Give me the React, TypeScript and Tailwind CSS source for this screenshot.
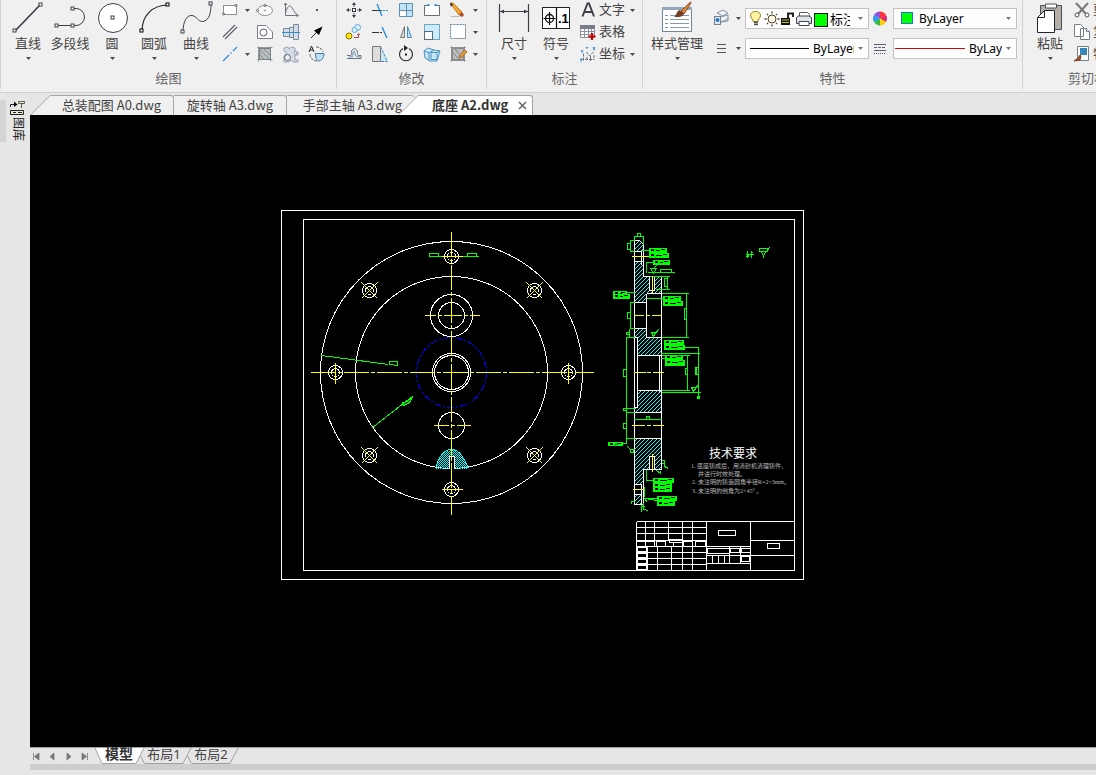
import type { ReactNode } from "react";

const INK = "#3b3f4a";
const BLUE = "#2b8fd8";
const PALE = "#bfe3f7";

function Caret({ tone = "#4a4a4a" }: { tone?: string }) {
  return (
    <svg width="5" height="3" viewBox="0 0 5 3" className="shrink-0" aria-hidden="true">
      <path d="M0 0H5L2.5 3Z" fill={tone} />
    </svg>
  );
}

function BigButton({ label, wide, caret = true, children }: { label: string; wide?: boolean; caret?: boolean; children: ReactNode }) {
  return (
    <button className={`flex shrink-0 flex-col items-center ${wide ? "w-14" : "w-[42px]"}`}>
      <svg width="42" height="36" viewBox="0 0 42 36" fill="none" stroke={INK} aria-hidden="true">
        {children}
      </svg>
      <span className="whitespace-nowrap leading-[14px]">{label}</span>
      <span className="flex h-4 items-center">{caret && <Caret />}</span>
    </button>
  );
}

function Tool({ name, children }: { name: string; children: ReactNode }) {
  return (
    <button aria-label={name} className="h-5 w-5 shrink-0">
      <svg width="20" height="20" viewBox="0 0 20 20" fill="none" stroke="#59606e" aria-hidden="true">
        {children}
      </svg>
    </button>
  );
}

function Drop({ name, show = true }: { name: string; show?: boolean }) {
  return show ? (
    <button aria-label={name} className="flex h-5 w-[15px] shrink-0 items-center justify-center">
      <Caret />
    </button>
  ) : (
    <span className="w-[15px] shrink-0" />
  );
}

function Group({ title, className, children }: { title: string; className?: string; children: ReactNode }) {
  return (
    <section aria-label={title} className={`flex h-[89px] shrink-0 flex-col border-r border-[#d2d2d2] ${className ?? ""}`}>
      <div className="flex h-[69px] pl-[6px]">{children}</div>
      <h2 className="text-center leading-[18px] text-[#666]">{title}</h2>
    </section>
  );
}

function Knot({ x, y, c = INK }: { x: number; y: number; c?: string }) {
  return <rect x={x - 1.5} y={y - 1.5} width="3" height="3" fill="#fff" stroke={c} />;
}

function DrawGroup() {
  return (
    <Group title="绘图" className="w-[337px] border-l">
      <BigButton label="直线">
        <path d="M8 31 33 5" strokeWidth="1.7" />
        <Knot x={7.5} y={30.5} />
        <Knot x={33.5} y={4.5} />
      </BigButton>
      <BigButton label="多段线" caret={false}>
        <path d="M7 25.5H23M25 8.5h2a8.5 8.5 0 0 1 0 17h-2" />
        <Knot x={7.5} y={25.5} />
        <Knot x={23.5} y={25.5} />
        <Knot x={23.5} y={8.5} />
      </BigButton>
      <BigButton label="圆">
        <circle cx="22" cy="18" r="14.5" fill="#fff" />
        <Knot x={21.5} y={17.5} />
      </BigButton>
      <BigButton label="圆弧">
        <path d="M9 31C9 16 19 5 35 5" stroke="#222" strokeWidth="1.2" />
        <Knot x={8.5} y={30.5} c="#000" />
        <Knot x={34.5} y={4.5} c="#000" />
      </BigButton>
      <BigButton label="曲线">
        <path d="M8 32C8 21 12 15 17 15.500C22 16 23 22 28 21.500C34 20 36 14 36 4" />
        <Knot x={7.500} y={31.500} />
        <Knot x={35.500} y={3.500} />
      </BigButton>
      <div className="ml-[3px] flex flex-col gap-[2px]">
        <div className="flex">
          <Tool name="矩形">
            <rect x="3.500" y="5.500" width="13" height="9" fill="#fff" stroke="#8a8f99" />
            <circle cx="3.500" cy="14" r="1" fill="#fff" />
            <circle cx="16" cy="5.500" r="1" fill="#fff" />
          </Tool>
          <Drop name="矩形选项" />
          <div className="flex gap-[6px]">
            <Tool name="椭圆">
              <ellipse cx="10" cy="10.500" rx="7.500" ry="5" fill="#fff" stroke="#8a8f99" />
              <path d="M10 9v3M8.500 10.500h3" stroke="#99aaaa" strokeWidth=".8" />
              <circle cx="10" cy="5.500" r="1" fill="#fff" />
              <circle cx="2.500" cy="10.500" r="1" fill="#fff" />
            </Tool>
            <Tool name="函数曲线">
              <path d="M4.500 3V15.500H17M3 5l1.500-2L6 5M15.500 14l2 1.500-2 1.500" stroke="#6c727d" />
              <path d="M4.500 13C6 7 8 5 10 6.500C12 8 13 13 16 14.500" stroke="#6c727d" />
            </Tool>
            <Tool name="点">
              <rect x="9" y="9" width="2" height="2" fill="#555" stroke="none" />
            </Tool>
          </div>
        </div>
        <div className="flex">
          <Tool name="双线">
            <path d="M3 15 15 3M5 17 17 5" strokeWidth="1.300" />
            <path d="M4 16 16 4" stroke="#fff" strokeWidth=".8" />
          </Tool>
          <Drop name="双线选项" show={false} />
          <div className="flex gap-[6px]">
            <Tool name="面域">
              <path d="M2.500 3.500H11L17.500 10V16.500H2.500Z" fill="#fff" stroke="#7b818c" />
              <circle cx="8.500" cy="10.500" r="3.500" />
            </Tool>
            <Tool name="轴">
              <path d="M2.500 6.500h6v8h-6zM8.500 5.500h4v10h-4zM12.500 2.500h5v15h-5z" fill="#d3dce6" stroke="#7b8ba0" />
              <path d="M1 10.500H19" stroke={BLUE} />
            </Tool>
            <Tool name="箭头">
              <path d="M4 16 10 10" stroke="#222" />
              <path d="M15.500 4.500 12 13 7 8.500Z" fill="#000" stroke="none" />
            </Tool>
          </div>
        </div>
        <div className="flex">
          <Tool name="中心线">
            <path d="M3 17 9 11M10.500 9.500l1-1M13 7 17 3" stroke={BLUE} strokeWidth="1.300" />
          </Tool>
          <Drop name="中心线选项" />
          <div className="flex gap-[6px]">
            <Tool name="填充">
              <rect x="4.500" y="4.500" width="11" height="11" fill="#b8bdbf" stroke="#777e82" />
              <path d="M2.500 3.500H17.500M3.500 2.500V17.500M15.500 2.500V17.500M2.500 15.500H17.500M5 6l9 9M5 11l4 4M9 5l6 6" stroke="#7c8387" strokeWidth=".8" />
            </Tool>
            <Tool name="齿轮">
              <path d="M3 4l4-1 1 2 2-2 4 1v4h3v3h-3v5h3v2h-5l-2-2-2 2H3V12L6 9 3 7Z" fill="#d8dee9" stroke="#98a1b3" />
              <circle cx="6.500" cy="13.500" r="3" fill="#f0f0f0" />
              <circle cx="14.500" cy="9" r="1.500" fill="#f0f0f0" stroke="#98a1b3" />
            </Tool>
            <Tool name="对称画线">
              <path d="M9 3a7 7 0 0 1 7 5M3 10a7 7 0 0 0 7 7" strokeDasharray="3 1" />
              <path d="M8.500 9.500H17C17 14 14 17 12 17S8.500 15 8.500 9.500Z" fill="#b8e0fb" stroke="#52758f" />
              <path d="M2 8 4.500 2 7 8M3 6h3" stroke="#222" />
            </Tool>
          </div>
        </div>
      </div>
    </Group>
  );
}

function ModifyGroup() {
  return (
    <Group title="修改" className="w-[150px]">
      <div className="ml-px flex flex-col gap-[2px]">
        <div className="flex">
          <div className="flex gap-[6px]">
            <Tool name="移动">
              <path d="M10 3v4M10 13v4M3 10h4M13 10h4" />
              <path d="M10 2 12 5H8ZM10 18l2-3H8ZM2 10l3-2v4ZM18 10l-3-2v4Z" fill={INK} stroke="none" />
              <rect x="8.500" y="8.500" width="3" height="3" fill="#fff" stroke="#333" />
            </Tool>
            <Tool name="修剪">
              <path d="M2 10.500h10" stroke="#333" />
              <path d="M7 4 12 16" stroke={BLUE} strokeWidth="1.400" />
              <path d="M13 10.500h5" stroke={BLUE} strokeDasharray="2 1" />
            </Tool>
            <Tool name="阵列">
              <path d="M3.500 3.500h13v13h-13z" fill={PALE} stroke="#5d8fb3" />
              <path d="M10.500 3.500v13M3.500 10.500h13" stroke="#5d8fb3" />
              <rect x="4" y="11" width="6" height="5" fill="#fff" stroke="none" />
            </Tool>
            <Tool name="打断">
              <path d="M6 5.500H2.500v10h15v-10H14" fill="#fff" stroke="#666c78" />
              <path d="M6.500 4v2M13.500 4v2" stroke={BLUE} strokeWidth="2" />
            </Tool>
            <Tool name="删除">
              <path d="M2 3 5 3 14 12 11 15Z" fill="#f3a638" stroke="#c77d1f" />
              <path d="M11 15l3-3 2 3-2 2Z" fill="#a44f28" stroke="none" />
              <path d="M2 3l1 4 2-3Z" fill="#222" stroke="none" />
              <path d="M3 16.500h9" stroke="#bbb" />
            </Tool>
          </div>
          <Drop name="删除选项" />
        </div>
        <div className="flex">
          <div className="flex gap-[6px]">
            <Tool name="复制">
              <circle cx="13.500" cy="5.500" r="3" fill="#ddf1fb" stroke="#5ba9d8" />
              <circle cx="10.500" cy="8" r="2.500" fill="#ddf1fb" stroke="#5ba9d8" />
              <circle cx="5" cy="14" r="3" fill="#ffe600" stroke="#8a7900" />
              <path d="M10 15.500h4.500v-3M13 13l1.500-1.500 1.500 1.500" stroke="#a44" />
            </Tool>
            <Tool name="延伸">
              <path d="M2 10.500h5" stroke="#333" />
              <path d="M7 10.500h5" stroke="#333" strokeDasharray="2 1" />
              <path d="M12 5 17 16" stroke={BLUE} strokeWidth="1.400" />
            </Tool>
            <Tool name="镜像">
              <path d="M8.500 4.500V15.500H4.500Z" fill="#ddd" stroke="#777" />
              <path d="M11.500 4.500V15.500H15.500Z" fill={PALE} stroke="#4a90bf" />
            </Tool>
            <Tool name="缩放">
              <rect x="2.500" y="2.500" width="15" height="15" fill="#cfeaf9" stroke="#6aa7cc" />
              <rect x="2.500" y="9.500" width="8" height="8" fill="#fff" stroke="#536d84" />
            </Tool>
            <Tool name="拉伸">
              <rect x="2.500" y="2.500" width="15" height="14" fill="#fff" stroke="#5b82a8" strokeDasharray="2 1" />
              <path d="M17.500 6v10.500H6" stroke="#999" />
            </Tool>
          </div>
          <Drop name="拉伸选项" />
        </div>
        <div className="flex">
          <div className="flex gap-[6px]">
            <Tool name="偏移">
              <path d="M3 11.500h3.500c1.500 0 1-2 1-3 0-5 6-5 6 0 0 1-.500 3 1 3h2.500v3H3" stroke="#68717d" />
              <path d="M5 13c6 0 3-1 4-4s2-2 2 0 0 4 5 4" stroke="#5d8caf" />
            </Tool>
            <Tool name="拉长">
              <path d="M10.500 2.500 17.500 17.500H10" fill="#cbe8f8" stroke="#438fbd" strokeDasharray="3 1" />
              <path d="M2.500 2.500h8v15h-8z" fill="#ddd" stroke="#777" />
            </Tool>
            <Tool name="旋转">
              <path d="M7 4.500a6.500 6.500 0 1 0 6 0" stroke="#333" strokeWidth="1.200" />
              <path d="M8 1v6l4-3Z" fill="#222" stroke="none" />
              <rect x="9" y="9.500" width="2" height="2" fill="#222" stroke="none" />
            </Tool>
            <Tool name="对齐">
              <path d="M2 7l4-3 6 2 6 1-3 10H8l-5-3Z" fill="#c8e8f8" stroke="#4c94c1" />
              <path d="M2 7l5 2 5-3M7 9v7M9 8.500h6v7H9zM15 8.500l3-2" stroke="#4c94c1" />
            </Tool>
            <Tool name="编辑填充">
              <rect x="4.500" y="4.500" width="11" height="11" fill="#bbb" stroke="#888" />
              <path d="M2.500 3.500h15M3.500 2.500v15M16.500 2.500v15M2.500 16.500h15M5 9l6 6M7 5l7 8" stroke="#777" strokeWidth=".8" />
              <path d="M17 6 12 11l-1 3 3-1 5-5Z" fill="#e69a3d" stroke="#a66f27" />
            </Tool>
          </div>
          <Drop name="编辑填充选项" />
        </div>
      </div>
    </Group>
  );
}

function AnnotateGroup() {
  return (
    <Group title="标注" className="w-[156px]">
      <BigButton label="尺寸">
        <path d="M6.500 4V32M35.500 4V32M7 11.500H35" strokeWidth="1.200" />
        <path d="M7 11.500l4-2v4ZM35 11.500l-4-2v4Z" fill={INK} stroke="none" />
      </BigButton>
      <BigButton label="符号">
        <rect x="7.500" y="7.500" width="27" height="21" fill="#fff" stroke="#222" />
        <path d="M21.500 7.500v21M8.500 18.500h12M14.500 12v13" stroke="#111" strokeWidth="1.200" />
        <circle cx="14.500" cy="18.500" r="4" stroke="#111" strokeWidth="1.300" />
        <text x="23" y="23" fill="#000" stroke="none" fontSize="13" fontWeight="700" fontFamily="Liberation Sans, sans-serif">.1</text>
      </BigButton>
      <div className="ml-px flex flex-col gap-[2px]">
        <div className="flex">
          <button className="flex h-5 items-center gap-px">
            <svg width="20" height="20" viewBox="0 0 20 20" fill="none" stroke={INK} aria-hidden="true">
              <path d="M4.500 16.500 9.500 3.500H11L16 16.500M6.500 12h7.500" strokeWidth="1.900" />
            </svg>
            文字
          </button>
          <Drop name="文字选项" />
        </div>
        <button className="flex h-5 items-center gap-px">
          <svg width="20" height="20" viewBox="0 0 20 20" fill="none" stroke="#8d939b" aria-hidden="true">
            <path d="M2.500 4.500h14v11h-14z" fill="#fff" />
            <path d="M2 3h15v4H2z" fill="#777e87" stroke="none" />
            <path d="M2.500 9.500h14M2.500 12.500h14M6.500 7v8M10.500 7v8M13.500 7v8" />
            <path d="M14 11v7M10.500 14.500h7" stroke="#c00" strokeWidth="2" />
          </svg>
          表格
        </button>
        <div className="flex">
          <button className="flex h-5 items-center gap-px">
            <svg width="20" height="20" viewBox="0 0 20 20" fill="none" stroke="#65717f" aria-hidden="true">
              <path d="M5.500 9.500v7.500M3 15.500h13M8.500 8l3 4 5-5M9 13v4M12.500 12v5M16 11v5" strokeDasharray="3 1" />
              <path d="M3 6l1 1.500L5.500 6M4 7.500V9M8 3l1 1.500L10 3M15 3l2 3M17 3l-2 3M3 14v4" stroke={BLUE} />
            </svg>
            坐标
          </button>
          <Drop name="坐标选项" />
        </div>
      </div>
    </Group>
  );
}

function Combo({ label, value, lead, boxed, tight }: { label: string; value: string; lead: ReactNode; boxed?: boolean; tight?: boolean }) {
  return (
    <label className="flex h-[21px] w-[124px] items-center border border-[#c3c3c3] bg-[#fdfdfd] pr-[5px]">
      {lead}
      <select
        aria-label={label}
        defaultValue={value}
        className={`min-w-0 flex-1 appearance-none overflow-hidden bg-transparent leading-4 text-black outline-none ${boxed ? "text-[13px]" : "text-xs"}`}
      >
        <option>{value}</option>
      </select>
      <span className={`flex ${tight ? "ml-1" : "ml-2"}`}><Caret tone="#777" /></span>
    </label>
  );
}

function PropertiesGroup() {
  return (
    <Group title="特性" className="w-[380px]">
      <BigButton label="样式管理" wide>
        <rect x="6.500" y="7.500" width="29" height="24" fill="#fff" stroke="#74869d" />
        <path d="M6 8.500h30" stroke="#93a6bd" strokeWidth="3" />
        <path d="M9 15.500h3M14 15.500h19M9 19.500h3M14 19.500h19M9 23.500h3M14 23.500h19M9 27.500h3M14 27.500h19" stroke="#8799ae" />
        <path d="M34.500 2 25 11l3 3 7-11Z" fill="#d8873d" stroke="#8f5124" />
        <path d="M24 10l4 4c-2 4-7 3-10 3 3-2 2-6 6-7Z" fill="#764021" stroke="none" />
      </BigButton>
      <div className="ml-[6px] flex flex-col pt-2">
        <div className="flex h-[30px] items-start">
          <Tool name="匹配图层">
            <path d="M6 5l6-3 5 3-5 3ZM9 9l8-2v4l-7 3M10 14l7-1v-3" fill="#edf1f4" stroke="#8792a0" />
            <rect x="3.500" y="8.500" width="6" height="8" fill="#dce9f5" stroke="#777f8c" />
            <circle cx="6.500" cy="12" r="2" fill="#287bb9" stroke="none" />
          </Tool>
          <Drop name="图层选项" />
        </div>
        <div className="flex items-start">
          <Tool name="线宽">
            <path d="M6 6.500h9M6 10.500h9M6 14.500h9" stroke="#555" strokeWidth="1.200" />
          </Tool>
          <Drop name="线宽选项" />
        </div>
      </div>
      <div className="-ml-px flex flex-col gap-[9px] pt-2">
        <Combo
          label="图层"
          value="标注"
          boxed
          lead={
            <svg width="82" height="19" viewBox="0 0 82 19" fill="none" aria-hidden="true" className="mr-[2px] shrink-0">
              <path d="M7 11.500C3 8 4 3 9.500 3S16 8 12 11.500V13H7Z" transform="translate(0 -.5)" fill="#fff4a0" stroke="#8e7b29" />
              <path d="M8 13.500h4M8 15.500h4" stroke="#555" strokeWidth="1.500" />
              <circle cx="26" cy="10" r="4" fill="#fffbe7" stroke="#4b4125" />
              <path d="M26 2.500v2M26 15.500v2M18.500 10h2M31.500 10h2M21 5l1 1M30 14l1 1M31 5l-1 1M21 15l1-1" stroke="#4b4125" strokeWidth="1.300" />
              <path d="M35 9h9v7h-9z" fill="#111" />
              <path d="M36 11h7M36 13.500h7" stroke="#c8c51f" />
              <path d="M42 9V4.500h5V8" stroke="#222" strokeWidth="2" />
              <path d="M53.500 8V3.500h8l2 2V8" fill="#fff" stroke="#555b66" />
              <path d="M50.500 8.500l2-1.500h10l3 1.500v6h-15Z" fill="#e1e4e8" stroke="#3d4350" />
              <path d="M53 12.500h10v4H53z" fill="#fff" stroke="#3d4350" />
              <rect x="68.500" y="4.500" width="13" height="13" fill="#0f0" stroke="#111" />
            </svg>
          }
        />
        <Combo
          label="线型"
          value="ByLayer"
          tight
          lead={<svg width="67" height="3" viewBox="0 0 67 3" aria-hidden="true" className="shrink-0"><path d="M4 1.500H63" stroke="#000" /></svg>}
        />
      </div>
      <div className="ml-px flex w-5 flex-col gap-[10px] pt-2">
        <Tool name="颜色">
          <g transform="translate(10 10.500)" stroke="none">
            <path d="M0 0 0-7A7 7 0 0 1 6-3.500Z" fill="#f33" />
            <path d="M0 0 6-3.500A7 7 0 0 1 6 3.500Z" fill="#e0246b" />
            <path d="M0 0 6 3.500A7 7 0 0 1 0 7Z" fill="#ffcf00" />
            <path d="M0 0 0 7A7 7 0 0 1-6 3.500Z" fill="#31bd43" />
            <path d="M0 0-6 3.500A7 7 0 0 1-6-3.500Z" fill="#299cf0" />
            <path d="M0 0-6-3.500A7 7 0 0 1 0-7Z" fill="#924dd9" />
          </g>
        </Tool>
        <Tool name="线型管理">
          <path d="M4 6.500h12M4 12.500h12" />
          <path d="M4 9.500h12" strokeDasharray="3 1" />
          <path d="M4 15.500h12" strokeDasharray="1 1" />
        </Tool>
      </div>
      <div className="ml-[3px] flex flex-col gap-[9px] pt-2">
        <Combo
          label="颜色"
          value="ByLayer"
          lead={<svg width="25" height="19" viewBox="0 0 25 19" aria-hidden="true" className="shrink-0"><rect x="7.500" y="3.500" width="11" height="11" fill="#0f0" stroke="#2277cc" /></svg>}
        />
        <Combo
          label="线宽"
          value="ByLayer"
          tight
          lead={<svg width="75" height="3" viewBox="0 0 75 3" aria-hidden="true" className="shrink-0"><path d="M1 1.500H71" stroke="#e00000" /></svg>}
        />
      </div>
    </Group>
  );
}

function ClipboardGroup() {
  return (
    <Group title="剪切板" className="w-[130px]">
      <BigButton label="粘贴">
        <path d="M11.500 5.500h21v24h-21z" fill="#b5afa8" stroke="#4c5059" />
        <path d="M16.500 4h11v4h-11z" fill="#fff" stroke="#4c5059" />
        <path d="M15.500 10.500H25.500V32.500H8.500V17.500Z" fill="#fff" stroke="#20252e" />
        <path d="M15.500 10.500v7h-7" stroke="#20252e" />
      </BigButton>
      <div className="ml-px flex flex-col gap-[2px]">
        <button className="flex h-5 items-center gap-px whitespace-nowrap">
          <svg width="20" height="20" viewBox="0 0 20 20" fill="none" stroke="#777" aria-hidden="true">
            <path d="M4 3 14 14M16 3 6 14" strokeWidth="2" />
            <circle cx="5" cy="15" r="2" fill="#fff" stroke="#555" />
            <circle cx="15" cy="15" r="2" fill="#fff" stroke="#555" />
          </svg>
          剪切
        </button>
        <button className="flex h-5 items-center gap-px whitespace-nowrap">
          <svg width="20" height="20" viewBox="0 0 20 20" fill="#fff" stroke="#777d87" aria-hidden="true">
            <path d="M2.500 2.500h6l3 3v9h-9zM8.500 6.500h6l3 3v8h-9z" />
            <path d="M14.500 6.500v3h3" />
          </svg>
          复制
        </button>
        <button className="flex h-5 items-center gap-px whitespace-nowrap">
          <svg width="20" height="20" viewBox="0 0 20 20" fill="#fff" stroke="#747e89" aria-hidden="true">
            <path d="M5.500 2.500h11v14h-11z" />
            <path d="M8 4h7v7h-7z" fill="#3685bd" stroke="none" />
            <path d="M8 11l-2 3-4 3 6-1 1-4Z" fill="#a0522d" stroke="#7b3f20" />
          </svg>
          特性匹配
        </button>
      </div>
    </Group>
  );
}

/* Tolerance label: a green block with dark cells cut out of it. */
function Tag({ x, y, w, h = 5 }: { x: number; y: number; w: number; h?: number }) {
  const rows = Math.max(1, Math.floor(h / 4));
  return (
    <g transform="translate(-.5 -.5)">
      <rect x={x} y={y} width={w} height={h} fill="#0f0" />
      {Array.from({ length: rows }, (_, r) => (
        <g key={r} fill="#000">
          <rect x={x + 2} y={y + 1 + r * 4} width="3" height="2" />
          <rect x={x + 7} y={y + 2 + r * 4} width={Math.max(2, w - 14)} height="1" />
          <rect x={x + w - 6} y={y + 1 + r * 4} width="4" height="1" />
        </g>
      ))}
    </g>
  );
}

function Bolt({ x, y, diagonal }: { x: number; y: number; diagonal?: boolean }) {
  return (
    <g>
      <circle cx={x} cy={y} r="7" stroke="#fff" />
      <circle cx={x} cy={y} r="4" stroke="#fff" />
      {diagonal && <path d={`M${x - 8} ${y - 8}l16 16M${x + 8} ${y - 8}l-16 16`} stroke="#ff0" />}
    </g>
  );
}

function PlanView() {
  return (
    <g>
      <circle cx="451" cy="372" r="131" stroke="#fff" />
      <circle cx="451" cy="372" r="96" stroke="#fff" />
      <circle cx="451" cy="372" r="35" stroke="#00f" strokeDasharray="7 2 2 2" />
      <circle cx="451" cy="372" r="19" stroke="#fff" />
      <circle cx="451" cy="372" r="17" stroke="#fff" />
      <circle cx="451" cy="315" r="21" stroke="#fff" />
      <circle cx="451" cy="315" r="13" stroke="#fff" />
      <circle cx="451" cy="425" r="13" stroke="#fff" />
      <g transform="translate(-.5 -.5)">
        <path d="M435 469C438 457 443 450 451 450S463 457 468 469Z" fill="url(#fine)" />
      </g>
      <path d="M435 468C438 457 443 449 451 449S463 457 468 468" stroke="#0ff" />
      <path d="M449 468V456h5v12" stroke="#fff" fill="#000" />
      <Bolt x={451} y={256} />
      <Bolt x={369} y={290} diagonal />
      <Bolt x={534} y={290} diagonal />
      <Bolt x={335} y={372} />
      <Bolt x={568} y={372} />
      <Bolt x={369} y={455} diagonal />
      <Bolt x={534} y={455} diagonal />
      <Bolt x={451} y={489} />
      <path d="M429 253h9v3h-9zM467 253h9v3h-9zM438 256h6M461 256h17" stroke="#0f0" />
      <path d="M321 355 388 364M389 361h8v4l-8-1z" stroke="#0f0" />
      <path d="M372 427 412 396M402 402l5-1 5-5-3 6-6 3z" stroke="#0f0" />
      <path d="M451 231V514M310 372H593" stroke="#ff0" strokeDasharray="25 2 4 2" />
      <path d="M441 256h21M335 362v21M568 362v21M441 489h21" stroke="#ff0" />
      <path d="M433 425h15M450 425h4M456 425h14M424 315h11M437 315h4M443 315h18M463 315h4M469 315h10" stroke="#ff0" />
    </g>
  );
}

function SectionView() {
  return (
    <g>
      <g fill="url(#hatch)" stroke="none" transform="translate(-.5 -.5)">
        <path d="M634 240h7l2 3v8h-9z" />
        <path d="M634 261h9v15h18v17h-15v9h-12z" />
        <path d="M634 328h12v9h15v18h-24v-18h-3z" />
        <path d="M637 390h24v22h-27v-5h3z" />
        <path d="M634 438h27v31h-18v15h-9z" />
        <path d="M634 494h8v10h-8z" />
      </g>
      <path d="M649 276h5v14h-5zM649 456h5v13h-5z" fill="#000" stroke="#fff" />
      <path
        d="M634 240V504M634 240h5l4 4V276H661V469H643V504H634M634 251h7v13M634 261h7M646 293h15M646 293v44M634 302h12M634 328h12M646 337h15M634 337h3v70h-3M637 355h24M637 390h24M659 354v38M634 412h27M634 438h27M634 484h7v20M634 494h7"
        stroke="#fff"
      />
      <g stroke="#0f0">
        <path d="M634 240v-5M643 244v-9M634 236h9M637 233h3v3h-3z" />
        <path d="M634 240h-5M634 251h-5M630 240v11M627 243h3v6h-3z" />
        <path d="M641 250h8M653 262h-7v10M647 272h27M660 269h11v3h-11zM650 268l3 5 3-5zM653 268l4-4" />
        <path d="M649 276h20M655 289h14M667 276v13M664 278h3v8h-3z" />
        <path d="M626 292h8M646 298h17M661 293h27M661 337h27M686 293v44M684 308h2v11h-2z" />
        <path d="M634 302h-5M634 328h-5M630 302v26M627 312h3v6h-3zM629 328v9M626 332h3v2h-3zM634 337h-9" />
        <path d="M651 332h4l-2 4zM655 333l3-4" />
        <path d="M684 347h14v50M660 353h39M661 355h28M687 355v35M661 390h28M661 392h39M665 358h-5" />
        <path d="M685 368h2v6h-2zM695 367h3v7h-3zM696 367v7M697 396h2v2h-2zM691 387h5l-3 4zM695 388l3-4" />
        <path d="M626 337V443H622M623 369h3v7h-3zM623 423h3v5h-3zM623 408h3v2h-3zM625 408h9M625 412h9M625 438h9" />
        <path d="M634 418v1h27v-1M646 416h3v3h-3zM627 446l3 3h4M630 449v3h3v-3" />
        <path d="M661 460h3v6l4 2M661 463h3M656 470l4 3v-3M646 469v11h7M644 486v10M643 498h14M657 500l-13-2 3 4" />
        <path d="M630 501h4M631 500v3M641 504v7M643 502v7l5 1M641 506h3" />
        <path d="M745 254h8M747 250v7M748 253v3M751 250v7M745 256h3M750 252h2M759 248h8v3h-8zM761 251l2 5 2-5M766 251l3-4" />
      </g>
      <Tag x={649} y={248} w={18} />
      <Tag x={649} y={253} w={20} />
      <Tag x={653} y={260} w={17} />
      <Tag x={613} y={291} w={14} h={4} />
      <Tag x={613} y={294} w={17} />
      <Tag x={663} y={296} w={18} />
      <Tag x={663} y={301} w={20} />
      <Tag x={664} y={340} w={20} />
      <Tag x={664} y={345} w={21} />
      <Tag x={665} y={355} w={18} />
      <Tag x={665} y={360} w={20} h={6} />
      <Tag x={608} y={442} w={15} h={4} />
      <Tag x={653} y={478} w={21} />
      <Tag x={653} y={483} w={19} h={9} />
      <Tag x={657} y={496} w={20} />
      <Tag x={657} y={501} w={18} />
      <path d="M631 256h17M652 275v17M633 315h10M645 315h4M651 315h10M633 372h12M646 372h4M652 372h11M631 425h13M646 425h4M652 425h11M652 453v18M632 489h11" stroke="#ff0" />
    </g>
  );
}

function TitleBlock() {
  return (
    <g stroke="#fff">
      <path d="M636 521H794M636 521V570M706 521v49M750 521v49M645 521v25M654 521v25M668 521v19M682 521v25M692 521v19M636 527h70M636 533h70M636 540h70M636 546h70M636 552h70M636 558h70M636 564h70M657 546v24M671 546v24M682 546v24M692 546v24" />
      <path d="M636 541h18M656 541h9v5h-9zM669 539h13v3h-13zM673 542v4M683 541h9v5h-9zM695 541h10v5h-10z" />
      <path d="M637 546v24M647 546v24M637 547h10M637 551h10M637 553h10M637 557h10M637 559h10M637 563h10M637 565h10M646 546v24M637 569h10" />
      <path d="M718 530h17v5h-17zM706 546h44M707 548h22v5h-22zM730 548h9v4h-9zM741 548h9v4h-9zM706 555h44M706 563h44M729 546v17M740 546v17M741 556h8v5h-8zM712 555v8M718 555v8M724 555v8M750 540h44M750 555h44M767 543h12v5h-12z" />
    </g>
  );
}

function Canvas() {
  return (
    <main className="min-h-0 flex-1 bg-black">
      <svg viewBox="30 115 1066 632" preserveAspectRatio="xMinYMin meet" className="block h-full w-full" role="img" aria-label="底座 A2">
        <defs>
          <pattern id="hatch" width="4" height="4" patternUnits="userSpaceOnUse">
            <path d="M0 3h1v1H0zM1 2h1v1H1zM2 1h1v1H2zM3 0h1v1H3z" fill="#0ff" />
          </pattern>
          <pattern id="fine" width="2" height="2" patternUnits="userSpaceOnUse">
            <path d="M0 0h1v1H0zM1 1h1v1H1z" fill="#0ff" />
          </pattern>
        </defs>
        <g transform="translate(.5 .5)" fill="none" shapeRendering="crispEdges">
          <path d="M281 210H803V579H281ZM303 219H794V570H303Z" stroke="#fff" />
          <PlanView />
          <SectionView />
          <TitleBlock />
        </g>
        <g fontFamily="Liberation Serif, Noto Sans CJK SC, sans-serif" fill="#fff">
          <text x="709" y="458" fontSize="12">技术要求</text>
          <g fontSize="6" fill="#b8b8b8">
            <text x="691" y="468">1. 底座铸成后，用清砂机清理铸件，</text>
            <text x="698" y="476">并进行时效处理。</text>
            <text x="692" y="484">2. 未注明的铸造圆角半径R=2~3mm。</text>
            <text x="692" y="493">3. 未注明的倒角为2×45° 。</text>
          </g>
        </g>
      </svg>
    </main>
  );
}

function FileTabs() {
  return (
    <nav aria-label="文件" className="flex h-[22px] items-end font-['Noto_Sans_CJK_SC',sans-serif] text-[13px] text-[#444]">
      <svg width="20" height="20" viewBox="0 0 20 20" className="shrink-0" aria-hidden="true">
        <path d="M0 20 20 0V20Z" fill="#f0f0f0" />
        <path d="M.5 20 20 .5" stroke="#a5a5a5" />
      </svg>
      <button className="h-5 w-[124px] whitespace-nowrap rounded-tr-[3px] border-r border-t border-[#a5a5a5] bg-[#f0f0f0] pb-[2px] leading-[17px]">总装配图 A0.dwg</button>
      <button className="h-5 w-[113px] whitespace-nowrap rounded-tr-[3px] border-r border-t border-[#a5a5a5] bg-[#f0f0f0] pb-[2px] leading-[17px]">旋转轴 A3.dwg</button>
      <button className="h-5 w-[127px] whitespace-nowrap rounded-tr-[3px] border-t border-[#a5a5a5] bg-[#f0f0f0] pb-[2px] pl-1 leading-[17px]">手部主轴 A3.dwg</button>
      <svg width="20" height="20" viewBox="0 0 20 20" className="-ml-4 shrink-0" aria-hidden="true">
        <path d="M0 20 20 0V20Z" fill="#fff" />
        <path d="M.5 20 20 .5" stroke="#a5a5a5" />
      </svg>
      <div className="flex h-5 w-[115px] items-center justify-between rounded-tr-[3px] border-r border-t border-[#a5a5a5] bg-white pl-[14px] pr-[5px]">
        <button aria-current="page" className="whitespace-nowrap pb-[2px] font-bold leading-[17px] text-[#333]">底座 A2.dwg</button>
        <button aria-label="关闭" className="h-[9px] w-[9px]">
          <svg width="9" height="9" viewBox="0 0 9 9" aria-hidden="true"><path d="M1 1 8 8M8 1 1 8" stroke="#666" strokeWidth="1.500" /></svg>
        </button>
      </div>
    </nav>
  );
}

function Slant() {
  return (
    <svg width="9" height="16" viewBox="0 0 9 16" className="shrink-0" aria-hidden="true">
      <path d="M0 15.500 8 0M4.500 8 8.500 15.500" stroke="#a0a0a0" fill="none" />
    </svg>
  );
}

function SheetTabs() {
  const moves = [
    { name: "第一张", d: "M1.500 1V8M7 1V8L2.500 4.500Z" },
    { name: "上一张", d: "M6 1V8L2 4.500Z" },
    { name: "下一张", d: "M3 1V8L7 4.500Z" },
    { name: "最后一张", d: "M7.500 1V8M2 1V8L6.500 4.500Z" },
  ];
  return (
    <nav aria-label="布局" className="flex h-[17px] items-start border-t border-[#a0a0a0] text-[13px] text-[#444]">
      <div className="flex w-[65px] gap-[7px] pl-[2px] pt-1">
        {moves.map((m) => (
          <button key={m.name} aria-label={m.name} className="h-[9px] w-[9px] shrink-0">
            <svg width="9" height="9" viewBox="0 0 9 9" aria-hidden="true"><path d={m.d} fill="#777" stroke="#777" strokeWidth=".8" /></svg>
          </button>
        ))}
      </div>
      <svg width="7" height="16" viewBox="0 0 7 16" className="shrink-0" aria-hidden="true">
        <path d="M0 0H7V16Z" fill="#fff" /><path d="M0 0 7 15.500" stroke="#a0a0a0" />
      </svg>
      <button aria-current="page" className="flex h-4 w-[34px] items-center justify-center whitespace-nowrap border-b border-[#a0a0a0] bg-white pb-[3px] text-sm font-bold leading-3 text-[#333]">模型</button>
      <svg width="9" height="16" viewBox="0 0 9 16" className="shrink-0" aria-hidden="true">
        <path d="M0 0H8L0 16Z" fill="#fff" /><path d="M0 15.500 8 0M4.500 8 8.500 15.500" stroke="#a0a0a0" fill="none" />
      </svg>
      <button className="flex h-4 w-[38px] items-center justify-center whitespace-nowrap border-b border-[#a0a0a0] pb-[3px] leading-3">布局1</button>
      <Slant />
      <button className="flex h-4 w-[38px] items-center justify-center whitespace-nowrap border-b border-[#a0a0a0] pb-[3px] leading-3">布局2</button>
      <svg width="9" height="16" viewBox="0 0 9 16" className="shrink-0" aria-hidden="true">
        <path d="M0 15.500 8 0" stroke="#a0a0a0" />
      </svg>
    </nav>
  );
}

function SidePanel() {
  return (
    <aside className="flex w-[30px] shrink-0 gap-1 pt-[7px]">
      <div className="h-[42px] w-[6px] shrink-0 bg-[#d4d4d4]" />
      <button className="flex w-[15px] flex-col items-center gap-px self-start text-xs leading-[14px] text-[#222]">
        <svg width="15" height="16" viewBox="0 0 15 16" fill="none" stroke="#222" aria-hidden="true">
          <path d="M.5 7V4.500H5" />
          <path d="M4 1.500 7.500 4.500 4 7Z" fill="#000" stroke="none" />
          <path d="M8.500 1.500h6v2h-6zM11.500 4v4" fill="#e8ebcf" stroke="#59604d" />
          <path d="M.5 10.500h13v4H.5z" fill="#e8ebcf" />
          <path d="M3 12.500h3M8 12.500h4" />
        </svg>
        <span className="[text-orientation:sideways] [writing-mode:vertical-rl]">图库</span>
      </button>
    </aside>
  );
}

export default function App() {
  return (
    <div className="flex h-screen flex-col overflow-hidden bg-[#e6e6e6] font-['Noto_Sans','Noto_Sans_CJK_SC',sans-serif] text-[13px] text-[#444]">
      <header className="flex h-[93px] shrink-0 overflow-hidden border-b border-[#cfcfcf] bg-[#f0f0f0]">
        <DrawGroup />
        <ModifyGroup />
        <AnnotateGroup />
        <PropertiesGroup />
        <ClipboardGroup />
      </header>
      <div className="flex min-h-0 flex-1">
        <SidePanel />
        <div className="flex min-w-0 flex-1 flex-col">
          <FileTabs />
          <Canvas />
          <SheetTabs />
          <div className="h-[6px] bg-[#cdcdcd]" />
          <div className="h-[5px]" />
        </div>
      </div>
    </div>
  );
}
